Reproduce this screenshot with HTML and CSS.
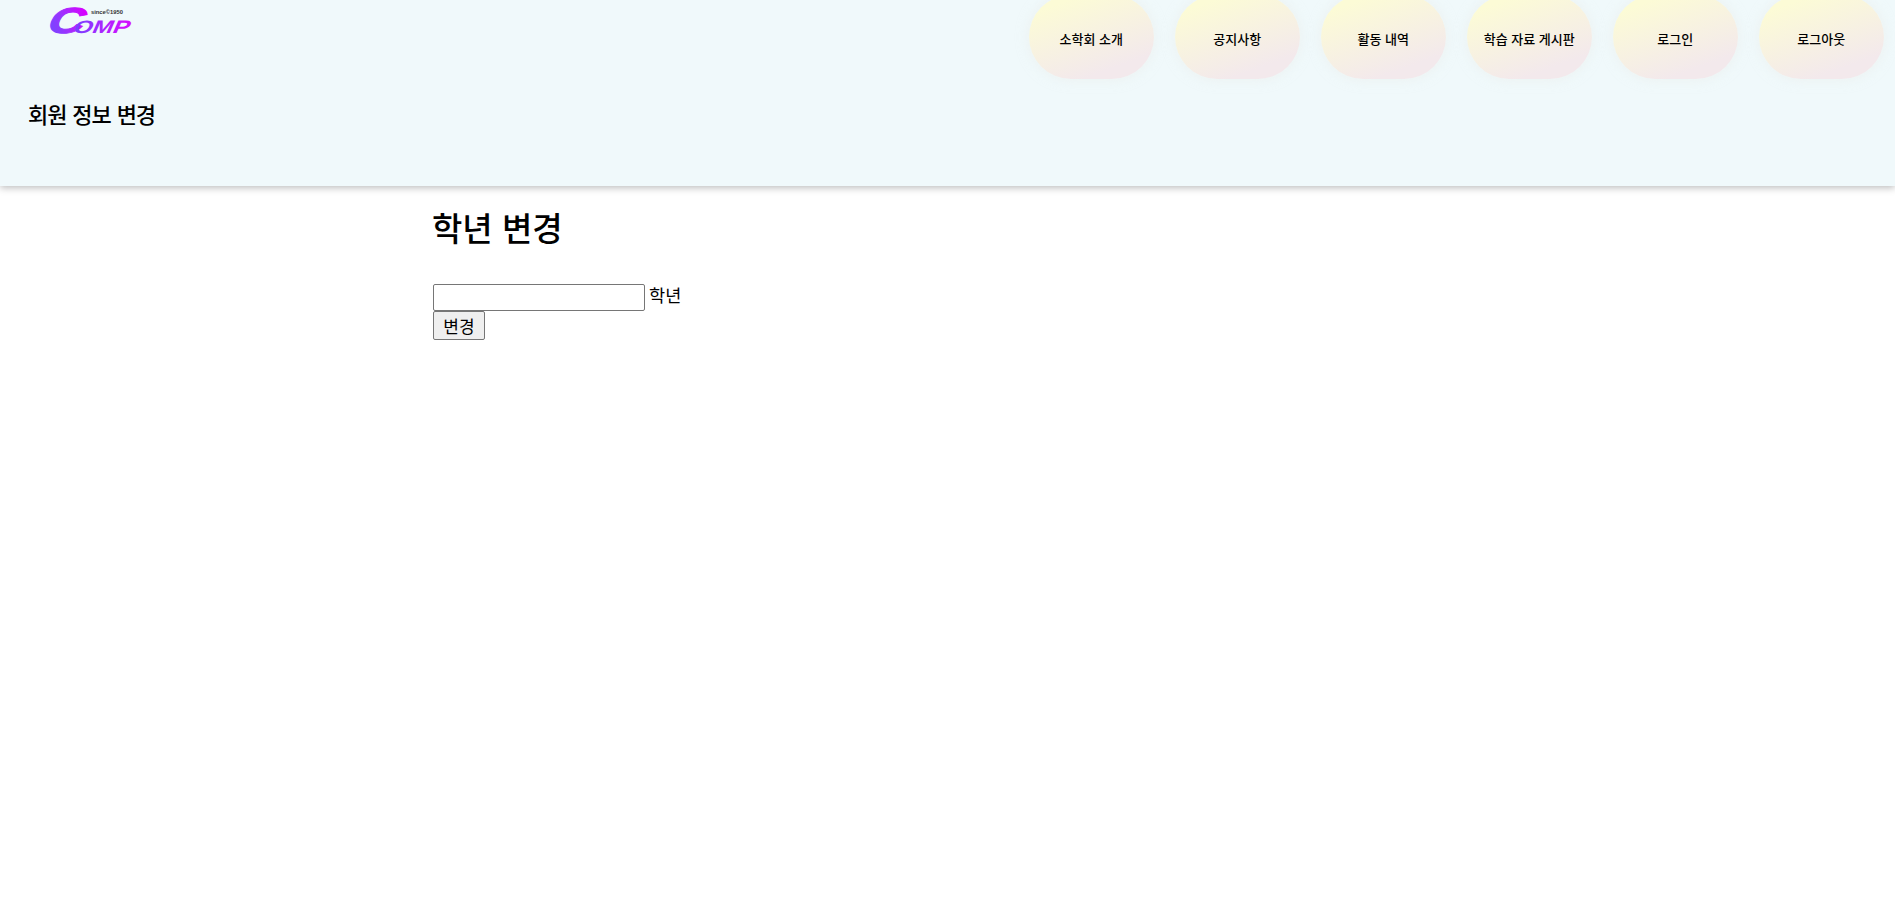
FILE: index.html
```html
<!DOCTYPE html>
<html lang="ko">
<head>
<meta charset="utf-8">
<title>학년 변경</title>
<link rel="stylesheet" href="styles.css">
</head>
<body>
<header class="site-header">
  <div class="top-row">
    <a class="logo" href="#">
      <svg class="logo-mark" width="84" height="32" viewBox="0 0 84 32" aria-label="Comp since 1950">
        <defs>
          <linearGradient id="logoGrad" gradientUnits="userSpaceOnUse" x1="0" y1="30" x2="36" y2="2">
            <stop offset="0" stop-color="#4f5cff"/>
            <stop offset="0.6" stop-color="#a030ff"/>
            <stop offset="1" stop-color="#d800ff"/>
          </linearGradient>
          <linearGradient id="ompGrad" gradientUnits="userSpaceOnUse" x1="25" y1="30" x2="84" y2="12">
            <stop offset="0" stop-color="#5f50ff"/>
            <stop offset="1" stop-color="#d010ff"/>
          </linearGradient>
        </defs>
        <g transform="skewX(-24)">
          <text class="logo-c" x="10" y="30" textLength="36" lengthAdjust="spacingAndGlyphs" fill="url(#logoGrad)" stroke="url(#logoGrad)">C</text>
          <text class="logo-omp" x="37" y="30" textLength="56" lengthAdjust="spacingAndGlyphs" fill="url(#ompGrad)">OMP</text>
        </g>
        <text class="logo-since" x="43" y="11" textLength="32" lengthAdjust="spacingAndGlyphs">since©1950</text>
      </svg>
    </a>
    <nav class="main-nav">
      <a class="nav-pill" href="#">소학회 소개</a>
      <a class="nav-pill" href="#">공지사항</a>
      <a class="nav-pill" href="#">활동 내역</a>
      <a class="nav-pill" href="#">학습 자료 게시판</a>
      <a class="nav-pill" href="#">로그인</a>
      <a class="nav-pill" href="#">로그아웃</a>
    </nav>
  </div>
  <h2 class="page-title">회원 정보 변경</h2>
</header>
<main class="content">
  <h1 class="section-title">학년 변경</h1>
  <form class="grade-form">
    <input class="grade-input" type="text"> <span class="grade-unit">학년</span><br>
    <button class="grade-submit" type="button">변경</button>
  </form>
</main>
</body>
</html>
```
FILE: styles.css
```css
* { box-sizing: border-box; }
html, body { margin: 0; padding: 0; background: #fff; }
body {
  font-family: "Noto Sans CJK KR", "Liberation Sans", sans-serif;
  color: #000;
  min-height: 899px;
}
.site-header {
  height: 186px;
  background: #f0f9fb;
  box-shadow: 0 2px 7px rgba(0, 0, 0, 0.26);
  overflow: hidden;
}
.top-row {
  display: flex;
  justify-content: space-between;
  align-items: flex-start;
  padding: 0 11px 0 48px;
  height: 79px;
}
.logo { display: block; margin-top: 3px; line-height: 0; }
.logo-mark { overflow: visible; }
.logo-c, .logo-omp {
  font-family: "Liberation Sans", sans-serif;
  font-weight: 700;
}
.logo-c { font-size: 36px; stroke-width: 1px; }
.logo-omp { font-size: 18px; }
.logo-since {
  font-family: "Liberation Sans", sans-serif;
  font-size: 6px;
  font-weight: 700;
  fill: #333;
}
.main-nav { display: flex; gap: 20.5px; }
.nav-pill {
  display: flex;
  align-items: center;
  justify-content: center;
  width: 125.5px;
  height: 84px;
  margin-top: -5px;
  padding-top: 3px;
  border-radius: 46px;
  background: linear-gradient(160deg, #fcfbd6 15%, #f3e9ec 80%);
  box-shadow: 0 0 14px rgba(230, 230, 220, 0.35);
  color: #000;
  font-size: 13px;
  font-weight: 500;
  text-decoration: none;
}
.page-title {
  margin: 18px 0 0 28px;
  font-size: 22px;
  font-weight: 500;
  letter-spacing: -1.1px;
  word-spacing: 1px;
  line-height: 32px;
}
.content { padding: 18px 0 0 433px; }
.section-title {
  margin: 0 0 31px -1px;
  font-size: 33px;
  font-weight: 500;
  line-height: 46px;
}
.grade-form { font-size: 18px; line-height: 26px; }
.grade-input {
  width: 212px;
  height: 27px;
  padding: 1px 2px;
  border: 1px solid #767676;
  border-radius: 2px;
  background: #fff;
  vertical-align: baseline;
}
.grade-unit { font-size: 17.5px; margin-left: -1px; }
.grade-submit {
  display: block;
  width: 52px;
  height: 29px;
  padding: 0;
  border: 1px solid #767676;
  border-radius: 2px;
  background: #efefef;
  color: #000;
  font-family: inherit;
  font-size: 17px;
  line-height: 1;
}
```
